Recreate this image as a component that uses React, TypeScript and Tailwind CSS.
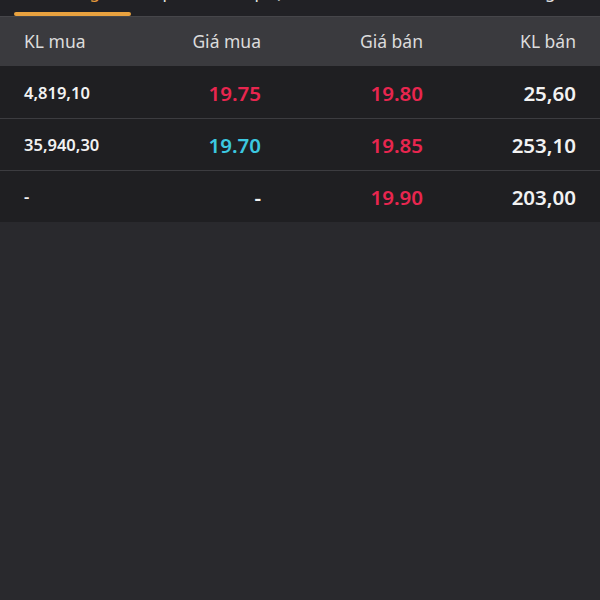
const rows = [
  { buyVol: '4,819,10', buyPrice: '19.75', buyColor: 'text-[#e8264f]', sellPrice: '19.80', sellVol: '25,60' },
  { buyVol: '35,940,30', buyPrice: '19.70', buyColor: 'text-[#3cc8e0]', sellPrice: '19.85', sellVol: '253,10' },
  { buyVol: '-', buyPrice: '-', buyColor: 'text-[#f2f2f2]', sellPrice: '19.90', sellVol: '203,00' },
]

const grid = 'grid grid-cols-[110px_127px_162px_153px] items-center px-6'

export default function App() {
  return (
    <div
      className="flex h-[600px] w-[600px] flex-col bg-[#29292d]"
      style={{ fontFamily: '"Noto Sans", "Open Sans", sans-serif' }}
    >
      {/* tab bar, cut at the top of the shot */}
      <div className="relative h-[17px] overflow-hidden border-b border-[#46464a] bg-[#212125]">
        <div className="-mt-[20px] flex whitespace-nowrap text-[17px] leading-[24px] text-[#e6e6e6]">
          <span className="ml-[44px] text-[#e79a3c]">Bước giá</span>
          <span className="ml-[30px]">Top</span>
          <span className="ml-[50px]">Khớp lệnh</span>
          <span className="ml-[200px]">Thống kê</span>
        </div>
        <div className="absolute bottom-0 left-[14px] h-[4px] w-[117px] rounded-sm bg-[#e9a23f]" />
      </div>

      {/* header */}
      <div className={`${grid} h-[49px] bg-[#3a3a3e] text-[17.5px] text-[#dcdcdc]`}>
        <span>KL mua</span>
        <span className="text-right">Giá mua</span>
        <span className="text-right">Giá bán</span>
        <span className="text-right">KL bán</span>
      </div>

      {/* order book */}
      <div className="bg-[#1f1f22]">
        {rows.map((r, i) => (
          <div
            key={i}
            className={`${grid} h-[52px] ${i > 0 ? 'border-t border-[#3c3c40]' : ''}`}
          >
            <span className="pt-[2px] text-[16.5px] font-semibold text-[#f2f2f2]">{r.buyVol}</span>
            <span className={`pt-[2px] text-right text-[20.5px] font-semibold ${r.buyColor}`}>{r.buyPrice}</span>
            <span className="pt-[2px] text-right text-[20.5px] font-semibold text-[#e8264f]">{r.sellPrice}</span>
            <span className="pt-[2px] text-right text-[20.5px] font-semibold text-[#f2f2f2]">{r.sellVol}</span>
          </div>
        ))}
      </div>
    </div>
  )
}
